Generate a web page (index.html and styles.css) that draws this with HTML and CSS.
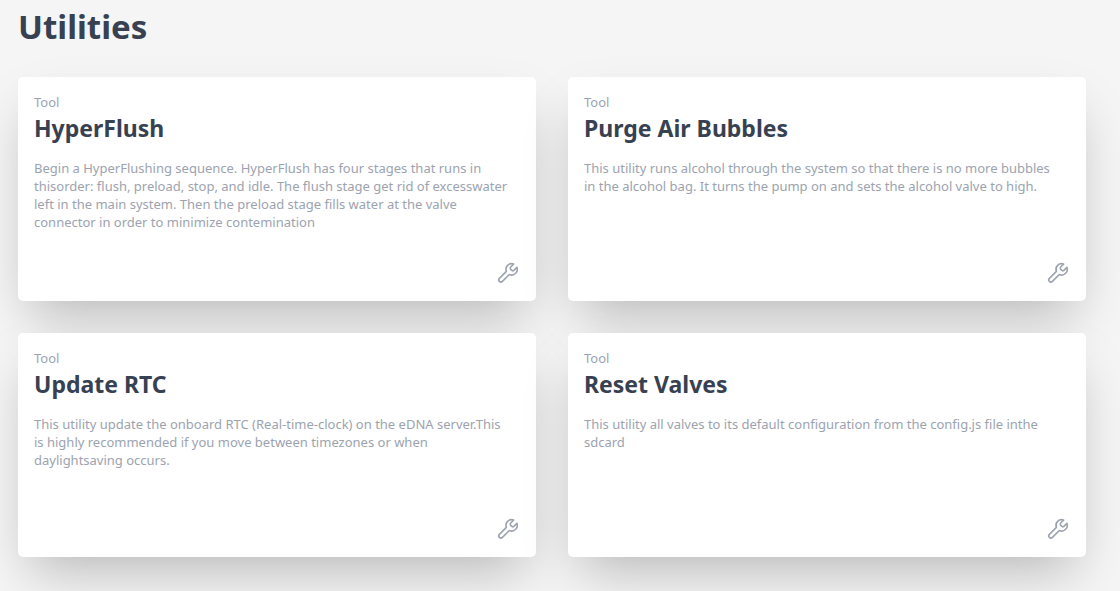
FILE: index.html
```html
<!DOCTYPE html>
<html lang="en">
<head>
<meta charset="utf-8">
<title>Utilities</title>
<link rel="stylesheet" href="styles.css">
</head>
<body>
<svg class="sprite" aria-hidden="true">
  <symbol id="wrench" viewBox="0 0 24 24">
    <path d="M20.9 6.4a5.6 5.6 0 0 1-7.6 7.1L6.4 20.4a2.12 2.12 0 0 1-3-3l7-7a5.6 5.6 0 0 1 7.2-7.3l-2.9 2.9a1.8 1.8 0 0 0-.2 2l1 1.1a1.8 1.8 0 0 0 2.4.3z"/>
  </symbol>
</svg>
<main class="page">
  <h1 class="page-title">Utilities</h1>
  <div class="grid">
    <article class="card">
      <p class="kind">Tool</p>
      <h2 class="name">HyperFlush</h2>
      <p class="description">Begin a HyperFlushing sequence. HyperFlush has four stages that runs in thisorder: flush, preload, stop, and idle. The flush stage get rid of excesswater left in the main system. Then the preload stage fills water at the valve connector in order to minimize contemination</p>
      <svg class="icon" aria-hidden="true"><use href="#wrench"/></svg>
    </article>
    <article class="card">
      <p class="kind">Tool</p>
      <h2 class="name">Purge Air Bubbles</h2>
      <p class="description">This utility runs alcohol through the system so that there is no more bubbles in the alcohol bag. It turns the pump on and sets the alcohol valve to high.</p>
      <svg class="icon" aria-hidden="true"><use href="#wrench"/></svg>
    </article>
    <article class="card">
      <p class="kind">Tool</p>
      <h2 class="name">Update RTC</h2>
      <p class="description">This utility update the onboard RTC (Real-time-clock) on the eDNA server.This is highly recommended if you move between timezones or when daylightsaving occurs.</p>
      <svg class="icon" aria-hidden="true"><use href="#wrench"/></svg>
    </article>
    <article class="card">
      <p class="kind">Tool</p>
      <h2 class="name">Reset Valves</h2>
      <p class="description">This utility all valves to its default configuration from the config.js file inthe sdcard</p>
      <svg class="icon" aria-hidden="true"><use href="#wrench"/></svg>
    </article>
  </div>
</main>
</body>
</html>
```
FILE: styles.css
```css
* { box-sizing: border-box; margin: 0; }
body {
  background: #f5f5f5;
  color: #374151;
  font-family: "Segoe UI", "Noto Sans", sans-serif;
}
.sprite { display: none; }
.page { padding: 0 34px 34px 18px; }
.page-title { font-size: 33px; line-height: 54px; font-weight: 700; }
.grid {
  display: grid;
  grid-template-columns: repeat(2, minmax(0, 1fr));
  gap: 32px;
  margin-top: 23px;
}
.card {
  display: flex;
  flex-direction: column;
  min-height: 224px;
  padding: 16px;
  background: #fff;
  border-radius: 5px;
  box-shadow: 0 25px 50px -12px rgba(0, 0, 0, 0.25);
}
.kind { color: #9ca3af; font-size: 13px; line-height: 18px; }
.name { font-size: 23px; line-height: 34px; font-weight: 700; }
.description {
  margin-top: 14px;
  padding-right: 8px;
  color: #9ca3af;
  font-size: 13px;
  line-height: 18px;
}
.icon {
  width: 24px;
  height: 24px;
  margin-top: auto;
  align-self: flex-end;
  fill: none;
  stroke: #9ca3af;
  stroke-width: 1.6;
  stroke-linecap: round;
  stroke-linejoin: round;
}
```
